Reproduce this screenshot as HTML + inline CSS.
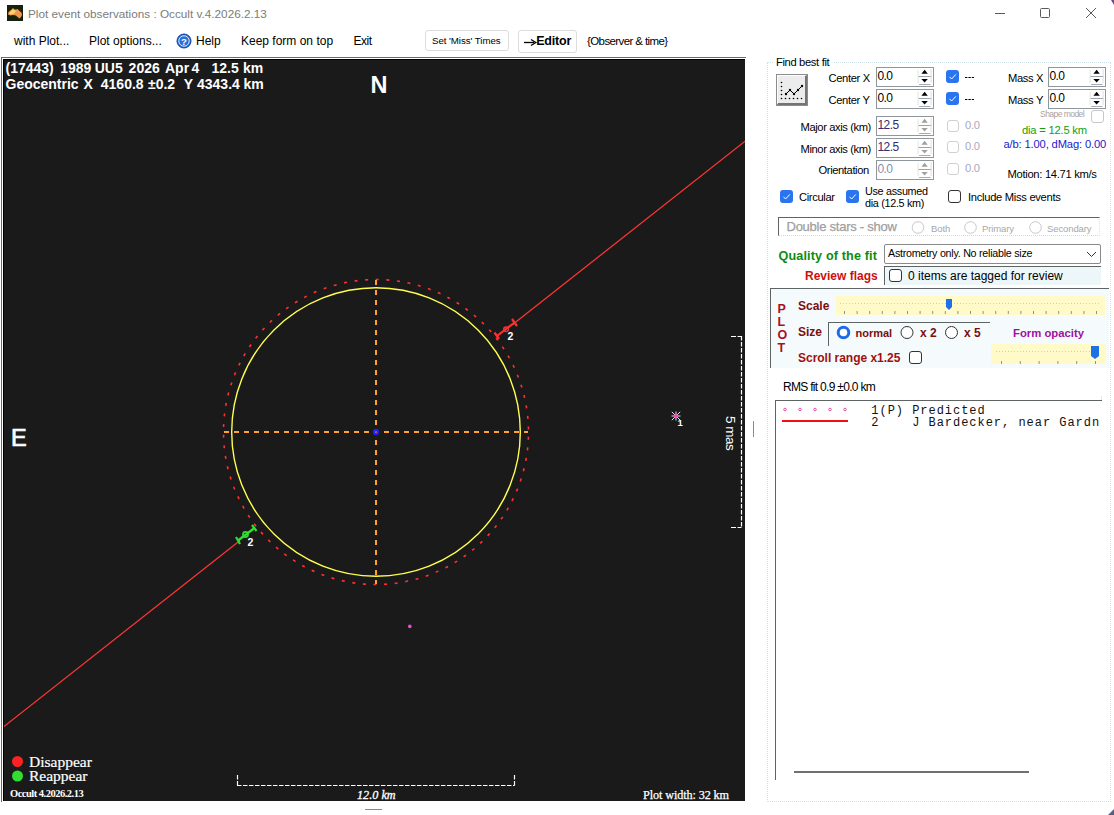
<!DOCTYPE html>
<html><head><meta charset="utf-8"><title>Plot event observations</title>
<style>
html,body{margin:0;padding:0;width:1114px;height:815px;overflow:hidden;background:#ffffff;}
.t{position:absolute;white-space:pre;}
.b{position:absolute;box-sizing:border-box;}
svg{position:absolute;left:0;top:0;}
</style></head><body>
<svg width="1114" height="815" style="z-index:0">
<rect x="7" y="5" width="16" height="16" fill="#18200e"/>
<path d="M8 14.5 L8.5 12 L11 10 L13 8 L14.5 9.5 L16 9.5 L17.5 9 L19.5 11 L21.5 12.5 L22 15 L21 17 L19.5 18.5 L17.5 17 L16 15.5 L13 15 L10.5 15.5 Z" fill="#f09850"/>
<path d="M9 13.5 L11.5 10.5 L13.5 9.5 L16 11 L14 13.5 L11 14.5 Z" fill="#f8d868"/>
<g stroke="#5a5a5a" stroke-width="1" fill="none">
<line x1="995" y1="13.5" x2="1005" y2="13.5"/>
<rect x="1040.5" y="8.5" width="9" height="9" rx="1"/>
<line x1="1086" y1="8" x2="1096" y2="18"/><line x1="1096" y1="8" x2="1086" y2="18"/>
</g>
</svg>
<div class="t" style="left:28px;top:8.01px;font-size:11.75px;line-height:11.75px;color:#7c7c7c;font-family:'Liberation Sans', sans-serif;">Plot event observations : Occult v.4.2026.2.13</div>
<div class="t" style="left:14px;top:34.80px;font-size:12px;line-height:12px;color:#000;font-family:'Liberation Sans', sans-serif;">with Plot...</div>
<div class="t" style="left:89px;top:34.80px;font-size:12px;line-height:12px;color:#000;font-family:'Liberation Sans', sans-serif;">Plot options...</div>
<svg width="1114" height="815"><circle cx="184" cy="41" r="7" fill="#2a6fd8" stroke="#1040a0" stroke-width="1"/>
<circle cx="184" cy="41" r="5.2" fill="none" stroke="#ffffff" stroke-width="0.8"/>
<text x="184" y="44.5" font-family="Liberation Sans" font-weight="bold" font-size="9.5" fill="#fff" text-anchor="middle">?</text></svg>
<div class="t" style="left:196px;top:34.80px;font-size:12px;line-height:12px;color:#000;font-family:'Liberation Sans', sans-serif;">Help</div>
<div class="t" style="left:241px;top:34.80px;font-size:12px;line-height:12px;color:#000;font-family:'Liberation Sans', sans-serif;">Keep form on top</div>
<div class="t" style="left:353.5px;top:34.80px;font-size:12px;line-height:12px;color:#000;font-family:'Liberation Sans', sans-serif;letter-spacing:-0.5px;">Exit</div>
<div class="b" style="left:425px;top:30px;width:84px;height:21px;border:1px solid #dcdcdc;border-radius:3px;background:#fff;"></div>
<div class="t" style="left:432px;top:35.76px;font-size:9.7px;line-height:9.7px;color:#000;font-family:'Liberation Sans', sans-serif;letter-spacing:-0.05px;">Set &#x27;Miss&#x27; Times</div>
<div class="b" style="left:518px;top:30px;width:59px;height:23px;border:1px solid #dcdcdc;border-radius:3px;background:#fff;"></div>
<svg width="1114" height="815"><line x1="524" y1="42.5" x2="534" y2="42.5" stroke="#000" stroke-width="1.3"/><path d="M531 39.5 L535.8 42.5 L531 45.5" stroke="#000" stroke-width="1.3" fill="none"/></svg>
<div class="t" style="left:536.2px;top:35.38px;font-size:12.5px;line-height:12.5px;color:#000;font-family:'Liberation Sans', sans-serif;font-weight:bold;letter-spacing:-0.2px;">Editor</div>
<div class="t" style="left:587px;top:36.23px;font-size:11.5px;line-height:11.5px;color:#000;font-family:'Liberation Sans', sans-serif;letter-spacing:-0.6px;">{Observer &amp; time}</div>
<div class="b" style="left:1px;top:57px;width:745px;height:1px;background:#6a6a6a;"></div>
<div class="b" style="left:1px;top:57px;width:1px;height:745px;background:#6a6a6a;"></div>
<div class="b" style="left:3px;top:59px;width:742px;height:1px;background:#000;"></div>
<div class="b" style="left:3px;top:59px;width:1px;height:742px;background:#000;"></div>
<div class="b" style="left:4px;top:60px;width:741px;height:741px;background:#1a1a1a;"></div>
<div class="b" style="left:753px;top:421px;width:1px;height:16px;background:#8a8a8a;"></div>
<div class="b" style="left:365px;top:809px;width:17px;height:1px;background:#8a8a8a;"></div>
<svg width="1114" height="815">
<defs><clipPath id="pc"><rect x="4" y="60" width="741" height="741"/></clipPath></defs>
<g clip-path="url(#pc)">
<line x1="3" y1="727.3" x2="240" y2="540.5" stroke="#ff3535" stroke-width="1.25"/>
<line x1="512" y1="325" x2="746" y2="140.5" stroke="#ff3535" stroke-width="1.25"/>
<circle cx="376" cy="432" r="152.5" fill="none" stroke="#ff3030" stroke-width="1.6" stroke-dasharray="3 7.647" stroke-dashoffset="-4.75"/>
<circle cx="376" cy="432" r="144.3" fill="none" stroke="#ffff50" stroke-width="1.4"/>
<line x1="224" y1="432" x2="528" y2="432" stroke="#ffa030" stroke-width="2" stroke-dasharray="5 5"/>
<line x1="376" y1="280" x2="376" y2="584" stroke="#ffa030" stroke-width="2" stroke-dasharray="5 5"/>
<circle cx="376" cy="432" r="3.2" fill="#2020f0"/><rect x="375" y="431.5" width="2" height="1.2" fill="#e08040"/>
<!-- red marker -->
<g stroke="#ff3030" stroke-width="2.2" fill="none">
<line x1="497" y1="336" x2="514.5" y2="322.5"/>
<line x1="494.5" y1="332.5" x2="499" y2="339"/>
<line x1="512" y1="319" x2="517" y2="326"/>
</g>
<circle cx="506" cy="329.3" r="2.3" fill="none" stroke="#ff3030" stroke-width="1.4"/>
<!-- green marker -->
<g stroke="#30e030" stroke-width="2.2" fill="none">
<line x1="238" y1="540.5" x2="254.5" y2="528"/>
<line x1="236" y1="537" x2="240" y2="544"/>
<line x1="252" y1="525" x2="256.5" y2="531"/>
</g>
<circle cx="245.5" cy="534.5" r="2.6" fill="none" stroke="#30e030" stroke-width="1.6"/>
<!-- 5 mas bar -->
<g stroke="#ffffff" stroke-width="1.2" fill="none">
<line x1="731" y1="336.5" x2="741.5" y2="336.5" stroke-dasharray="5 1.5"/>
<line x1="741.5" y1="336" x2="741.5" y2="528" stroke-dasharray="4.5 1.5"/>
<line x1="731" y1="527.5" x2="741.5" y2="527.5" stroke-dasharray="5 1.5"/>
<!-- 12 km bar -->
<line x1="237.5" y1="775" x2="237.5" y2="785.5" stroke-dasharray="4.5 1.5"/>
<line x1="237" y1="785.5" x2="514.5" y2="785.5" stroke-dasharray="4.5 1.5"/>
<line x1="514.5" y1="775" x2="514.5" y2="785.5" stroke-dasharray="4.5 1.5"/>
</g>
<!-- star 1 -->
<g stroke="#ffffff" stroke-width="1" opacity="0.9">
<line x1="671.5" y1="416" x2="680.5" y2="416"/><line x1="676" y1="411.5" x2="676" y2="420.5"/>
<line x1="671.8" y1="411.8" x2="680.2" y2="420.2"/><line x1="680.2" y1="411.8" x2="671.8" y2="420.2"/>
</g>
<circle cx="676" cy="416" r="2" fill="#ff40c0"/>
<circle cx="409.8" cy="626.4" r="1.8" fill="#f048d8"/>
<!-- legend -->
<circle cx="17.5" cy="761.5" r="5.5" fill="#ff2020"/>
<circle cx="17.5" cy="776" r="5.5" fill="#30dd30"/>
</g>
</svg>
<div class="t" style="left:5.5px;top:61.10px;font-size:14px;line-height:14px;color:#fff;font-family:'Liberation Sans', sans-serif;font-weight:bold;">(17443)</div>
<div class="t" style="left:60.2px;top:61.10px;font-size:14px;line-height:14px;color:#fff;font-family:'Liberation Sans', sans-serif;font-weight:bold;">1989</div>
<div class="t" style="left:94.7px;top:61.10px;font-size:14px;line-height:14px;color:#fff;font-family:'Liberation Sans', sans-serif;font-weight:bold;">UU5</div>
<div class="t" style="left:128.6px;top:61.10px;font-size:14px;line-height:14px;color:#fff;font-family:'Liberation Sans', sans-serif;font-weight:bold;">2026</div>
<div class="t" style="left:165.0px;top:61.10px;font-size:14px;line-height:14px;color:#fff;font-family:'Liberation Sans', sans-serif;font-weight:bold;">Apr</div>
<div class="t" style="left:191.39999999999998px;top:61.10px;font-size:14px;line-height:14px;color:#fff;font-family:'Liberation Sans', sans-serif;font-weight:bold;">4</div>
<div class="t" style="left:211.5px;top:61.10px;font-size:14px;line-height:14px;color:#fff;font-family:'Liberation Sans', sans-serif;font-weight:bold;">12.5</div>
<div class="t" style="left:242.89999999999998px;top:61.10px;font-size:14px;line-height:14px;color:#fff;font-family:'Liberation Sans', sans-serif;font-weight:bold;">km</div>
<div class="t" style="left:5.5px;top:77.10px;font-size:14px;line-height:14px;color:#fff;font-family:'Liberation Sans', sans-serif;font-weight:bold;">Geocentric</div>
<div class="t" style="left:83.4px;top:77.10px;font-size:14px;line-height:14px;color:#fff;font-family:'Liberation Sans', sans-serif;font-weight:bold;">X</div>
<div class="t" style="left:100.8px;top:77.10px;font-size:14px;line-height:14px;color:#fff;font-family:'Liberation Sans', sans-serif;font-weight:bold;">4160.8</div>
<div class="t" style="left:148.0px;top:77.10px;font-size:14px;line-height:14px;color:#fff;font-family:'Liberation Sans', sans-serif;font-weight:bold;">±0.2</div>
<div class="t" style="left:183.79999999999998px;top:77.10px;font-size:14px;line-height:14px;color:#fff;font-family:'Liberation Sans', sans-serif;font-weight:bold;">Y</div>
<div class="t" style="left:197.0px;top:77.10px;font-size:14px;line-height:14px;color:#fff;font-family:'Liberation Sans', sans-serif;font-weight:bold;">4343.4</div>
<div class="t" style="left:243.5px;top:77.10px;font-size:14px;line-height:14px;color:#fff;font-family:'Liberation Sans', sans-serif;font-weight:bold;">km</div>
<div class="t" style="left:370.5px;top:74.03px;font-size:23.5px;line-height:23.5px;color:#fff;font-family:'Liberation Sans', sans-serif;font-weight:bold;">N</div>
<div class="t" style="left:11px;top:426.82px;font-size:23.5px;line-height:23.5px;color:#fff;font-family:'Liberation Sans', sans-serif;-webkit-text-stroke:0.7px #fff;">E</div>
<div class="t" style="left:507.6px;top:331.38px;font-size:10.5px;line-height:10.5px;color:#fff;font-family:'Liberation Sans', sans-serif;font-weight:bold;">2</div>
<div class="t" style="left:247.4px;top:536.58px;font-size:10.5px;line-height:10.5px;color:#fff;font-family:'Liberation Sans', sans-serif;font-weight:bold;">2</div>
<div class="t" style="left:677.5px;top:417.93px;font-size:9.5px;line-height:9.5px;color:#ffffff;font-family:'Liberation Sans', sans-serif;font-weight:bold;">1</div>
<div class="t" style="left:29px;top:754.13px;font-size:15.5px;line-height:15.5px;color:#fff;font-family:'Liberation Serif', serif;-webkit-text-stroke:0.2px #fff;">Disappear</div>
<div class="t" style="left:29px;top:768.13px;font-size:15.5px;line-height:15.5px;color:#fff;font-family:'Liberation Serif', serif;-webkit-text-stroke:0.2px #fff;">Reappear</div>
<div class="t" style="left:10px;top:788.78px;font-size:10.5px;line-height:10.5px;color:#fff;font-family:'Liberation Serif', serif;font-weight:bold;letter-spacing:-0.5px;">Occult 4.2026.2.13</div>
<div class="t" style="left:357px;top:788.87px;font-size:12.2px;line-height:12.2px;color:#fff;font-family:'Liberation Serif', serif;font-style:italic;-webkit-text-stroke:0.3px #fff;">12.0 km</div>
<div class="t" style="left:643px;top:788.87px;font-size:12.2px;line-height:12.2px;color:#fff;font-family:'Liberation Serif', serif;letter-spacing:-0.1px;-webkit-text-stroke:0.25px #fff;">Plot width: 32 km</div>
<div class="t" style="left:736.5px;top:415.5px;transform-origin:0 0;transform:rotate(90deg);font-family:'Liberation Sans';font-size:13.5px;line-height:13.5px;letter-spacing:-0.5px;color:#fff;">5 mas</div>
<div class="b" style="left:767px;top:62px;width:344px;height:740px;border:1px dotted #cfe2ea;"></div>
<div class="b" style="left:1096px;top:396px;width:6px;height:384px;border-right:1px dotted #d8e6ea;"></div>
<div class="b" style="left:773px;top:57px;width:60px;height:12px;background:#fff;"></div>
<div class="t" style="left:776px;top:56.98px;font-size:11.2px;line-height:11.2px;color:#000;font-family:'Liberation Sans', sans-serif;letter-spacing:-0.35px;">Find best fit</div>
<div class="b" style="left:776px;top:74px;width:32px;height:32px;border:1px solid #8c8c8c;background:#fff;"></div>
<div class="b" style="left:777px;top:75px;width:30px;height:30px;border-right:2px solid #747474;border-bottom:2px solid #747474;border-top:1px solid #fff;border-left:1px solid #fff;background:#ececec;"></div>
<svg width="1114" height="815"><g fill="#000">
<circle cx="781.5" cy="82.5" r="0.8"/><circle cx="781.5" cy="86.5" r="0.8"/><circle cx="781.5" cy="90.5" r="0.8"/><circle cx="781.5" cy="94.5" r="0.8"/><circle cx="781.5" cy="98.5" r="0.8"/>
<circle cx="785.5" cy="98.5" r="0.8"/><circle cx="789.5" cy="98.5" r="0.8"/><circle cx="793.5" cy="98.5" r="0.8"/><circle cx="797.5" cy="98.5" r="0.8"/><circle cx="801.5" cy="98.5" r="0.8"/>
<circle cx="786" cy="94" r="1.2"/><circle cx="790" cy="90" r="1.2"/><circle cx="794" cy="94" r="1.2"/><circle cx="798" cy="90" r="1.2"/><circle cx="802" cy="86" r="1.2"/>
</g><polyline points="786,94 790,90 794,94 798,90 802,86" stroke="#000" stroke-width="1" fill="none"/></svg>
<div class="t" style="left:828.5px;top:72.98px;font-size:11.2px;line-height:11.2px;color:#000;font-family:'Liberation Sans', sans-serif;letter-spacing:-0.35px;">Center X</div>
<div class="t" style="left:828.5px;top:94.98px;font-size:11.2px;line-height:11.2px;color:#000;font-family:'Liberation Sans', sans-serif;letter-spacing:-0.35px;">Center Y</div>
<div class="b" style="left:876px;top:67px;width:58px;height:20px;border:1px solid #8e979c;background:#fff;"></div>
<div class="t" style="left:877.5px;top:70.00px;font-size:12px;line-height:12px;color:#000;font-family:'Liberation Sans', sans-serif;letter-spacing:-0.6px;">0.0</div>
<svg width="1114" height="815"><path d="M921.4 73.7 L924.6 69.7 L927.8000000000001 73.7 Z" fill="#000"/><path d="M921.4 79 L924.6 82.6 L927.8000000000001 79 Z" fill="#000"/><line x1="918.1" y1="76.5" x2="931.6" y2="76.5" stroke="#9aa4b0" stroke-width="1"/><line x1="918.1" y1="70" x2="918.1" y2="83" stroke="#dfe6d8" stroke-width="1"/><line x1="931.1" y1="69" x2="931.1" y2="83" stroke="#e6dce0" stroke-width="1"/><line x1="919.1" y1="84.5" x2="930.6" y2="84.5" stroke="#a8acb8" stroke-width="1"/></svg>
<div class="b" style="left:876px;top:89px;width:58px;height:20px;border:1px solid #8e979c;background:#fff;"></div>
<div class="t" style="left:877.5px;top:92.00px;font-size:12px;line-height:12px;color:#000;font-family:'Liberation Sans', sans-serif;letter-spacing:-0.6px;">0.0</div>
<svg width="1114" height="815"><path d="M921.4 95.7 L924.6 91.7 L927.8000000000001 95.7 Z" fill="#000"/><path d="M921.4 101 L924.6 104.6 L927.8000000000001 101 Z" fill="#000"/><line x1="918.1" y1="98.5" x2="931.6" y2="98.5" stroke="#9aa4b0" stroke-width="1"/><line x1="918.1" y1="92" x2="918.1" y2="105" stroke="#dfe6d8" stroke-width="1"/><line x1="931.1" y1="91" x2="931.1" y2="105" stroke="#e6dce0" stroke-width="1"/><line x1="919.1" y1="106.5" x2="930.6" y2="106.5" stroke="#a8acb8" stroke-width="1"/></svg>
<div class="b" style="left:946px;top:70px;width:13px;height:13px;background:#2a74f0;border-radius:3px;"></div>
<svg width="1114" height="815"><path d="M949.5 76.8 L951.6 79 L955.8 74.4" stroke="#fff" stroke-width="1" fill="none"/></svg>
<div class="b" style="left:946px;top:92px;width:13px;height:13px;background:#2a74f0;border-radius:3px;"></div>
<svg width="1114" height="815"><path d="M949.5 98.8 L951.6 101 L955.8 96.4" stroke="#fff" stroke-width="1" fill="none"/></svg>
<svg width="1114" height="815"><line x1="965" y1="77.5" x2="974" y2="77.5" stroke="#000" stroke-width="1" stroke-dasharray="2.4 1"/><line x1="965" y1="99.5" x2="974" y2="99.5" stroke="#000" stroke-width="1" stroke-dasharray="2.4 1"/></svg>
<div class="t" style="left:1008px;top:72.98px;font-size:11.2px;line-height:11.2px;color:#000;font-family:'Liberation Sans', sans-serif;letter-spacing:-0.35px;">Mass X</div>
<div class="t" style="left:1008px;top:94.98px;font-size:11.2px;line-height:11.2px;color:#000;font-family:'Liberation Sans', sans-serif;letter-spacing:-0.35px;">Mass Y</div>
<div class="b" style="left:1048px;top:67px;width:58px;height:20px;border:1px solid #8e979c;background:#fff;"></div>
<div class="t" style="left:1049.5px;top:70.00px;font-size:12px;line-height:12px;color:#000;font-family:'Liberation Sans', sans-serif;letter-spacing:-0.6px;">0.0</div>
<svg width="1114" height="815"><path d="M1093.3999999999999 73.7 L1096.6 69.7 L1099.8 73.7 Z" fill="#000"/><path d="M1093.3999999999999 79 L1096.6 82.6 L1099.8 79 Z" fill="#000"/><line x1="1090.1" y1="76.5" x2="1103.6" y2="76.5" stroke="#9aa4b0" stroke-width="1"/><line x1="1090.1" y1="70" x2="1090.1" y2="83" stroke="#dfe6d8" stroke-width="1"/><line x1="1103.1" y1="69" x2="1103.1" y2="83" stroke="#e6dce0" stroke-width="1"/><line x1="1091.1" y1="84.5" x2="1102.6" y2="84.5" stroke="#a8acb8" stroke-width="1"/></svg>
<div class="b" style="left:1048px;top:89px;width:58px;height:20px;border:1px solid #8e979c;background:#fff;"></div>
<div class="t" style="left:1049.5px;top:92.00px;font-size:12px;line-height:12px;color:#000;font-family:'Liberation Sans', sans-serif;letter-spacing:-0.6px;">0.0</div>
<svg width="1114" height="815"><path d="M1093.3999999999999 95.7 L1096.6 91.7 L1099.8 95.7 Z" fill="#000"/><path d="M1093.3999999999999 101 L1096.6 104.6 L1099.8 101 Z" fill="#000"/><line x1="1090.1" y1="98.5" x2="1103.6" y2="98.5" stroke="#9aa4b0" stroke-width="1"/><line x1="1090.1" y1="92" x2="1090.1" y2="105" stroke="#dfe6d8" stroke-width="1"/><line x1="1103.1" y1="91" x2="1103.1" y2="105" stroke="#e6dce0" stroke-width="1"/><line x1="1091.1" y1="106.5" x2="1102.6" y2="106.5" stroke="#a8acb8" stroke-width="1"/></svg>
<div class="t" style="left:1040px;top:109.99px;font-size:8.6px;line-height:8.6px;color:#aaa4a4;font-family:'Liberation Sans', sans-serif;letter-spacing:-0.6px;">Shape model</div>
<div class="b" style="left:1091px;top:110px;width:13px;height:13px;border:1px solid #c8c8c8;border-radius:3px;background:#fff;"></div>
<div class="t" style="left:800.5px;top:121.98px;font-size:11.2px;line-height:11.2px;color:#000;font-family:'Liberation Sans', sans-serif;letter-spacing:-0.4px;">Major axis (km)</div>
<div class="t" style="left:800.5px;top:143.98px;font-size:11.2px;line-height:11.2px;color:#000;font-family:'Liberation Sans', sans-serif;letter-spacing:-0.4px;">Minor axis (km)</div>
<div class="t" style="left:818.5px;top:164.98px;font-size:11.2px;line-height:11.2px;color:#000;font-family:'Liberation Sans', sans-serif;letter-spacing:-0.4px;">Orientation</div>
<div class="b" style="left:876px;top:116px;width:58px;height:20px;border:1px solid #8e979c;background:#fff;"></div>
<div class="t" style="left:877.5px;top:119.00px;font-size:12px;line-height:12px;color:#3a2a6a;font-family:'Liberation Sans', sans-serif;letter-spacing:-0.6px;">12.5</div>
<svg width="1114" height="815"><path d="M921.4 122.7 L924.6 118.7 L927.8000000000001 122.7 Z" fill="#a0a0a0"/><path d="M921.4 128 L924.6 131.6 L927.8000000000001 128 Z" fill="#a0a0a0"/><line x1="918.1" y1="125.5" x2="931.6" y2="125.5" stroke="#9aa4b0" stroke-width="1"/><line x1="918.1" y1="119" x2="918.1" y2="132" stroke="#dfe6d8" stroke-width="1"/><line x1="931.1" y1="118" x2="931.1" y2="132" stroke="#e6dce0" stroke-width="1"/><line x1="919.1" y1="133.5" x2="930.6" y2="133.5" stroke="#a8acb8" stroke-width="1"/></svg>
<div class="b" style="left:876px;top:138px;width:58px;height:20px;border:1px solid #8e979c;background:#fff;"></div>
<div class="t" style="left:877.5px;top:141.00px;font-size:12px;line-height:12px;color:#3a2a6a;font-family:'Liberation Sans', sans-serif;letter-spacing:-0.6px;">12.5</div>
<svg width="1114" height="815"><path d="M921.4 144.7 L924.6 140.7 L927.8000000000001 144.7 Z" fill="#a0a0a0"/><path d="M921.4 150 L924.6 153.6 L927.8000000000001 150 Z" fill="#a0a0a0"/><line x1="918.1" y1="147.5" x2="931.6" y2="147.5" stroke="#9aa4b0" stroke-width="1"/><line x1="918.1" y1="141" x2="918.1" y2="154" stroke="#dfe6d8" stroke-width="1"/><line x1="931.1" y1="140" x2="931.1" y2="154" stroke="#e6dce0" stroke-width="1"/><line x1="919.1" y1="155.5" x2="930.6" y2="155.5" stroke="#a8acb8" stroke-width="1"/></svg>
<div class="b" style="left:876px;top:160px;width:58px;height:20px;border:1px solid #8e979c;background:#fff;"></div>
<div class="t" style="left:877.5px;top:163.00px;font-size:12px;line-height:12px;color:#8090b0;font-family:'Liberation Sans', sans-serif;letter-spacing:-0.6px;">0.0</div>
<svg width="1114" height="815"><path d="M921.4 166.7 L924.6 162.7 L927.8000000000001 166.7 Z" fill="#a0a0a0"/><path d="M921.4 172 L924.6 175.6 L927.8000000000001 172 Z" fill="#a0a0a0"/><line x1="918.1" y1="169.5" x2="931.6" y2="169.5" stroke="#9aa4b0" stroke-width="1"/><line x1="918.1" y1="163" x2="918.1" y2="176" stroke="#dfe6d8" stroke-width="1"/><line x1="931.1" y1="162" x2="931.1" y2="176" stroke="#e6dce0" stroke-width="1"/><line x1="919.1" y1="177.5" x2="930.6" y2="177.5" stroke="#a8acb8" stroke-width="1"/></svg>
<div class="b" style="left:947px;top:120px;width:12px;height:12px;border:1px solid #d0d0d0;border-radius:3px;background:#fff;"></div>
<div class="t" style="left:965px;top:120.48px;font-size:11.2px;line-height:11.2px;color:#a8a8c0;font-family:'Liberation Sans', sans-serif;letter-spacing:-0.3px;">0.0</div>
<div class="b" style="left:947px;top:141px;width:12px;height:12px;border:1px solid #d0d0d0;border-radius:3px;background:#fff;"></div>
<div class="t" style="left:965px;top:141.48px;font-size:11.2px;line-height:11.2px;color:#a8a8c0;font-family:'Liberation Sans', sans-serif;letter-spacing:-0.3px;">0.0</div>
<div class="b" style="left:947px;top:163px;width:12px;height:12px;border:1px solid #d0d0d0;border-radius:3px;background:#fff;"></div>
<div class="t" style="left:965px;top:163.48px;font-size:11.2px;line-height:11.2px;color:#a8a8c0;font-family:'Liberation Sans', sans-serif;letter-spacing:-0.3px;">0.0</div>
<div class="t" style="left:1022px;top:124.98px;font-size:11.2px;line-height:11.2px;color:#10a010;font-family:'Liberation Sans', sans-serif;letter-spacing:-0.2px;">dia = 12.5 km</div>
<div class="t" style="left:1003.5px;top:138.98px;font-size:11.2px;line-height:11.2px;color:#2020d0;font-family:'Liberation Sans', sans-serif;letter-spacing:-0.15px;">a/b: 1.00, dMag: 0.00</div>
<div class="t" style="left:1007.5px;top:168.98px;font-size:11.2px;line-height:11.2px;color:#000;font-family:'Liberation Sans', sans-serif;letter-spacing:-0.3px;">Motion: 14.71 km/s</div>
<div class="b" style="left:780px;top:190px;width:13px;height:13px;background:#2a74f0;border-radius:3px;"></div>
<svg width="1114" height="815"><path d="M783.5 196.8 L785.6 199 L789.8 194.4" stroke="#fff" stroke-width="1" fill="none"/></svg>
<div class="t" style="left:799px;top:192.28px;font-size:11.2px;line-height:11.2px;color:#000;font-family:'Liberation Sans', sans-serif;letter-spacing:-0.35px;">Circular</div>
<div class="b" style="left:846px;top:190px;width:13px;height:13px;background:#2a74f0;border-radius:3px;"></div>
<svg width="1114" height="815"><path d="M849.5 196.8 L851.6 199 L855.8 194.4" stroke="#fff" stroke-width="1" fill="none"/></svg>
<div class="t" style="left:865px;top:185.52px;font-size:10.8px;line-height:10.8px;color:#000;font-family:'Liberation Sans', sans-serif;letter-spacing:-0.3px;">Use assumed</div>
<div class="t" style="left:865px;top:198.12px;font-size:10.8px;line-height:10.8px;color:#000;font-family:'Liberation Sans', sans-serif;letter-spacing:-0.3px;">dia (12.5 km)</div>
<div class="b" style="left:948px;top:190px;width:13px;height:13px;border:1px solid #333;border-radius:3px;background:#fff;"></div>
<div class="t" style="left:968px;top:192.28px;font-size:11.2px;line-height:11.2px;color:#000;font-family:'Liberation Sans', sans-serif;letter-spacing:-0.3px;">Include Miss events</div>
<div class="b" style="left:778px;top:217px;width:322px;height:19px;border-top:1.5px solid #5e6464;border-left:1.5px solid #5e6464;border-bottom:1px dotted #cfd8dc;border-right:1px dotted #dfe4e6;"></div>
<div class="t" style="left:786.5px;top:219.95px;font-size:13px;line-height:13px;color:#a0a0a0;font-family:'Liberation Sans', sans-serif;letter-spacing:-0.25px;-webkit-text-stroke:0.25px #a0a0a0;">Double stars - show</div>
<svg width="1114" height="815"><circle cx="918" cy="227.5" r="5.8" fill="#fff" stroke="#c8c8c8" stroke-width="1"/></svg>
<div class="t" style="left:931px;top:223.93px;font-size:9.5px;line-height:9.5px;color:#a8a8a8;font-family:'Liberation Sans', sans-serif;letter-spacing:-0.1px;">Both</div>
<svg width="1114" height="815"><circle cx="970.5" cy="227.5" r="5.8" fill="#fff" stroke="#c8c8c8" stroke-width="1"/></svg>
<div class="t" style="left:982px;top:223.93px;font-size:9.5px;line-height:9.5px;color:#a8a8a8;font-family:'Liberation Sans', sans-serif;letter-spacing:-0.1px;">Primary</div>
<svg width="1114" height="815"><circle cx="1035.5" cy="227.5" r="5.8" fill="#fff" stroke="#c8c8c8" stroke-width="1"/></svg>
<div class="t" style="left:1047px;top:223.93px;font-size:9.5px;line-height:9.5px;color:#a8a8a8;font-family:'Liberation Sans', sans-serif;letter-spacing:-0.1px;">Secondary</div>
<div class="t" style="left:778.5px;top:249.79px;font-size:12.6px;line-height:12.6px;color:#0c8c0c;font-family:'Liberation Sans', sans-serif;font-weight:bold;letter-spacing:0.15px;">Quality of the fit</div>
<div class="b" style="left:884px;top:244px;width:217px;height:20px;border:1px solid #8a8a8a;border-radius:2px;background:#fff;"></div>
<div class="t" style="left:888px;top:248.41px;font-size:10.7px;line-height:10.7px;color:#000;font-family:'Liberation Sans', sans-serif;letter-spacing:-0.25px;">Astrometry only. No reliable size</div>
<svg width="1114" height="815"><polyline points="1087,252 1091.5,256.5 1096,252" stroke="#333" stroke-width="1" fill="none"/></svg>
<div class="t" style="left:805px;top:270.30px;font-size:12px;line-height:12px;color:#cc1010;font-family:'Liberation Sans', sans-serif;font-weight:bold;">Review flags</div>
<div class="b" style="left:884px;top:266px;width:217px;height:19px;border-top:1.5px solid #5e6464;border-left:1.5px solid #5e6464;background:#edf7fa;"></div>
<div class="b" style="left:889px;top:269px;width:13px;height:13px;border:1px solid #333;border-radius:3px;background:#fff;"></div>
<div class="t" style="left:908px;top:270.10px;font-size:12px;line-height:12px;color:#000;font-family:'Liberation Sans', sans-serif;letter-spacing:0.0px;">0 items are tagged for review</div>
<div class="b" style="left:770px;top:287.5px;width:339px;height:80px;border-top:1.5px solid #5e6464;border-left:1.5px solid #5e6464;background:#f5fafc;"></div>
<div class="t" style="left:777.5px;top:303.38px;font-size:12.5px;line-height:12.5px;color:#a81020;font-family:'Liberation Sans', sans-serif;font-weight:bold;">P</div>
<div class="t" style="left:777.5px;top:316.27px;font-size:12.5px;line-height:12.5px;color:#a81020;font-family:'Liberation Sans', sans-serif;font-weight:bold;">L</div>
<div class="t" style="left:777.5px;top:329.18px;font-size:12.5px;line-height:12.5px;color:#a81020;font-family:'Liberation Sans', sans-serif;font-weight:bold;">O</div>
<div class="t" style="left:777.5px;top:342.07px;font-size:12.5px;line-height:12.5px;color:#a81020;font-family:'Liberation Sans', sans-serif;font-weight:bold;">T</div>
<div class="t" style="left:798px;top:299.80px;font-size:12px;line-height:12px;color:#7a1010;font-family:'Liberation Sans', sans-serif;font-weight:bold;">Scale</div>
<div class="b" style="left:836px;top:296px;width:269px;height:19px;background:#fffac8;"></div>
<svg width="1114" height="815"><line x1="840" y1="303.5" x2="1100" y2="303.5" stroke="#d8c8c8" stroke-width="1" stroke-dasharray="1 2"/><line x1="844.5" y1="311" x2="844.5" y2="314" stroke="#909090" stroke-width="1"/><line x1="857.1" y1="311" x2="857.1" y2="314" stroke="#909090" stroke-width="1"/><line x1="869.7" y1="311" x2="869.7" y2="314" stroke="#909090" stroke-width="1"/><line x1="882.3" y1="311" x2="882.3" y2="314" stroke="#909090" stroke-width="1"/><line x1="894.9" y1="311" x2="894.9" y2="314" stroke="#909090" stroke-width="1"/><line x1="907.5" y1="311" x2="907.5" y2="314" stroke="#909090" stroke-width="1"/><line x1="920.1" y1="311" x2="920.1" y2="314" stroke="#909090" stroke-width="1"/><line x1="932.7" y1="311" x2="932.7" y2="314" stroke="#909090" stroke-width="1"/><line x1="945.3" y1="311" x2="945.3" y2="314" stroke="#909090" stroke-width="1"/><line x1="957.9" y1="311" x2="957.9" y2="314" stroke="#909090" stroke-width="1"/><line x1="970.5" y1="311" x2="970.5" y2="314" stroke="#909090" stroke-width="1"/><line x1="983.1" y1="311" x2="983.1" y2="314" stroke="#909090" stroke-width="1"/><line x1="995.7" y1="311" x2="995.7" y2="314" stroke="#909090" stroke-width="1"/><line x1="1008.3" y1="311" x2="1008.3" y2="314" stroke="#909090" stroke-width="1"/><line x1="1020.9" y1="311" x2="1020.9" y2="314" stroke="#909090" stroke-width="1"/><line x1="1033.5" y1="311" x2="1033.5" y2="314" stroke="#909090" stroke-width="1"/><line x1="1046.1" y1="311" x2="1046.1" y2="314" stroke="#909090" stroke-width="1"/><line x1="1058.7" y1="311" x2="1058.7" y2="314" stroke="#909090" stroke-width="1"/><line x1="1071.3" y1="311" x2="1071.3" y2="314" stroke="#909090" stroke-width="1"/><line x1="1083.9" y1="311" x2="1083.9" y2="314" stroke="#909090" stroke-width="1"/><line x1="1096.5" y1="311" x2="1096.5" y2="314" stroke="#909090" stroke-width="1"/><path d="M946 299 L952 299 L952 307 L949 310 L946 307 Z" fill="#1e70e8"/></svg>
<div class="t" style="left:798px;top:325.80px;font-size:12px;line-height:12px;color:#7a1010;font-family:'Liberation Sans', sans-serif;font-weight:bold;">Size</div>
<div class="b" style="left:828px;top:322px;width:162px;height:24px;border-top:1.5px solid #5e6464;border-left:1.5px solid #5e6464;"></div>
<svg width="1114" height="815"><circle cx="843.5" cy="332.5" r="5.3" fill="#fff" stroke="#1e6ae8" stroke-width="3"/><circle cx="907" cy="332.5" r="6" fill="#fff" stroke="#333" stroke-width="1"/><circle cx="951.5" cy="332.5" r="6" fill="#fff" stroke="#333" stroke-width="1"/></svg>
<div class="t" style="left:855.5px;top:328.15px;font-size:11px;line-height:11px;color:#7a1010;font-family:'Liberation Sans', sans-serif;font-weight:bold;">normal</div>
<div class="t" style="left:920px;top:327.30px;font-size:12px;line-height:12px;color:#7a1010;font-family:'Liberation Sans', sans-serif;font-weight:bold;">x 2</div>
<div class="t" style="left:964px;top:327.30px;font-size:12px;line-height:12px;color:#7a1010;font-family:'Liberation Sans', sans-serif;font-weight:bold;">x 5</div>
<div class="t" style="left:1013px;top:328.39px;font-size:11.3px;line-height:11.3px;color:#a010a0;font-family:'Liberation Sans', sans-serif;font-weight:bold;">Form opacity</div>
<div class="b" style="left:991px;top:344px;width:115px;height:20px;background:#fffac8;"></div>
<svg width="1114" height="815"><line x1="996" y1="351.5" x2="1100" y2="351.5" stroke="#d8c8c8" stroke-width="1" stroke-dasharray="1 2"/><line x1="1001.5" y1="361" x2="1001.5" y2="364" stroke="#909090" stroke-width="1"/><line x1="1020.3" y1="361" x2="1020.3" y2="364" stroke="#909090" stroke-width="1"/><line x1="1039.1" y1="361" x2="1039.1" y2="364" stroke="#909090" stroke-width="1"/><line x1="1057.9" y1="361" x2="1057.9" y2="364" stroke="#909090" stroke-width="1"/><line x1="1076.7" y1="361" x2="1076.7" y2="364" stroke="#909090" stroke-width="1"/><line x1="1095.5" y1="361" x2="1095.5" y2="364" stroke="#909090" stroke-width="1"/><path d="M1091 346 L1099 346 L1099 356 L1095 359 L1091 356 Z" fill="#1e70e8"/></svg>
<div class="t" style="left:798px;top:351.80px;font-size:12px;line-height:12px;color:#a01010;font-family:'Liberation Sans', sans-serif;font-weight:bold;letter-spacing:-0.02px;">Scroll range x1.25</div>
<div class="b" style="left:909px;top:351px;width:13px;height:13px;border:1px solid #333;border-radius:3px;background:#fff;"></div>
<div class="t" style="left:783px;top:380.80px;font-size:12px;line-height:12px;color:#000;font-family:'Liberation Sans', sans-serif;letter-spacing:-0.7px;">RMS fit 0.9 ±0.0 km</div>
<div class="b" style="left:775px;top:400px;width:327px;height:380px;border-top:1.5px solid #5e6464;border-left:1.5px solid #5e6464;background:#fff;"></div>
<svg width="1114" height="815"><circle cx="785" cy="409.5" r="1.3" fill="none" stroke="#e040a0" stroke-width="0.9"/><circle cx="800" cy="409.5" r="1.3" fill="none" stroke="#e040a0" stroke-width="0.9"/><circle cx="815" cy="409.5" r="1.3" fill="none" stroke="#e040a0" stroke-width="0.9"/><circle cx="830" cy="409.5" r="1.3" fill="none" stroke="#e040a0" stroke-width="0.9"/><circle cx="845" cy="409.5" r="1.3" fill="none" stroke="#e040a0" stroke-width="0.9"/><line x1="782" y1="421" x2="848" y2="421" stroke="#ee1010" stroke-width="2"/><line x1="794" y1="772" x2="1029" y2="772" stroke="#707070" stroke-width="2"/></svg>
<div class="t" style="left:871.3px;top:405.08px;font-size:12px;line-height:12px;color:#111;font-family:'Liberation Mono', monospace;letter-spacing:0.97px;">1(P) Predicted</div>
<div class="t" style="left:871.3px;top:416.88px;font-size:12px;line-height:12px;color:#111;font-family:'Liberation Mono', monospace;letter-spacing:0.97px;">2&nbsp; &nbsp; J Bardecker, near Gardn</div>
<svg width="1114" height="815"><path d="M1111 0 L1114 0 L1114 5 Z" fill="#6a4a80"/><path d="M1114 809 L1114 815 L1108 815 Z" fill="#5a6080"/></svg>
</body></html>
